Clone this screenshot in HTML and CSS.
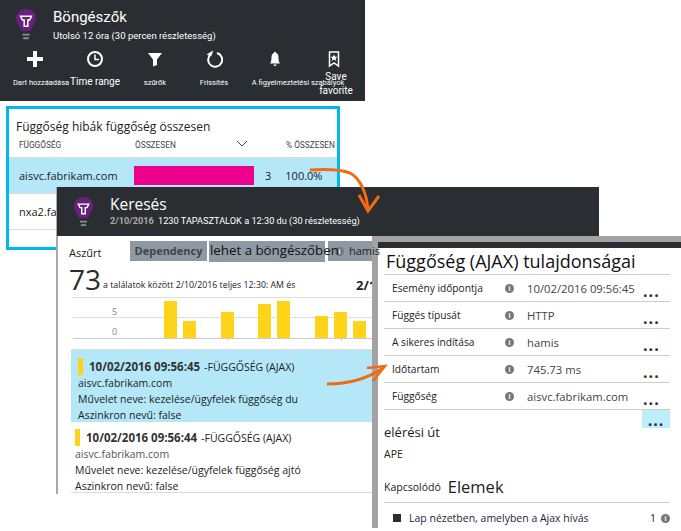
FILE: index.html
```html
<!DOCTYPE html>
<html lang="en">

<head>
  <meta charset="UTF-8" />
  <title>Böngészők</title>
  <link rel="stylesheet" href="styles.css">
</head>

<body>

  <section class="blade-top">
    <div class="head">
      <svg class="bulb" width="22" height="33" viewBox="0 0 24 36">
        <path d="M12 1C5 1 1 6 1 11c0 5 3 7 5 12c.5 1 1 2 2 2h8c1 0 1.500-1 2-2c2-5 5-7 5-12C23 6 19 1 12 1z" fill="#68217a" />
        <path d="M6 9h12l-2 4h-2v7h-4v-7H8z" fill="none" stroke="#fff" stroke-width="1.600" />
        <path d="M8 28h8v2H8zM9 32h6v2H9z" fill="#8a8d90" />
      </svg>
      <div>
        <div class="head-title">Böngészők</div>
        <div class="head-sub">Utolsó 12 óra (30 percen részletesség)</div>
      </div>
    </div>
    <div class="tools">
      <div class="tool t1">
        <svg width="18" height="18" viewBox="0 0 18 18"><path d="M7 1h4v6h6v4h-6v6H7v-6H1V7h6z" fill="#fff" /></svg>
        <span>Dart hozzáadása</span>
      </div>
      <div class="tool t2">
        <svg width="18" height="18" viewBox="0 0 18 18"><circle cx="9" cy="9" r="7" fill="none" stroke="#fff" stroke-width="2" /><path d="M9 4.500V9.500h4" fill="none" stroke="#fff" stroke-width="1.500" /></svg>
        <span class="big">Time range</span>
      </div>
      <div class="tool t3">
        <svg width="18" height="18" viewBox="0 0 18 18"><path d="M2 3h14l-5 6.500V15l-4 1.500v-7z" fill="#fff" /></svg>
        <span>szűrők</span>
      </div>
      <div class="tool t4">
        <svg width="18" height="18" viewBox="0 0 18 18"><path d="M5.500 4.500A7 7 0 1 0 12 3" fill="none" stroke="#fff" stroke-width="2" /><path d="M7 0v6H2z" fill="#fff" transform="rotate(20 6 4)" /></svg>
        <span>Frissítés</span>
      </div>
      <div class="tool t5">
        <svg width="18" height="18" viewBox="0 0 18 18"><path d="M9 2c-.8 0-1.200.5-1.200 1.100C6 3.800 5.500 5.500 5.500 7.500c0 3.500-.8 5-1.500 6h10c-.7-1-1.500-2.500-1.500-6c0-2-.5-3.700-2.300-4.400C10.200 2.500 9.800 2 9 2zM7.500 14.500h3a1.500 1.500 0 0 1-3 0z" fill="#fff" /></svg>
        <span>A figyelmeztetési szabályok</span>
      </div>
      <div class="tool t6">
        <svg width="18" height="18" viewBox="0 0 18 18"><path d="M4.500 2h9v14L9 13l-4.500 3z" fill="none" stroke="#fff" stroke-width="1.500" /><path d="M9 4.500l1.100 2.300h2.400L10.600 8.400l.7 2.500L9 9.500l-2.300 1.400l.7-2.500L5.500 6.800h2.400z" fill="#fff" /></svg>
        <span class="big">Save favorite</span>
      </div>
    </div>
  </section>

  <section class="frame">
    <div class="frame-title">Függőség hibák függőség összesen</div>
    <div class="cols">
      <span class="col-a">FÜGGŐSÉG</span>
      <span class="col-b">ÖSSZESEN</span>
      <svg class="chev" width="12" height="6" viewBox="0 0 12 6"><path d="M1 0l5 5l5-5" fill="none" stroke="#444" /></svg>
      <span class="col-c">% ÖSSZESEN</span>
    </div>
    <div class="dep-row on">
      <span class="dep-name">aisvc.fabrikam.com</span>
      <span class="dep-bar"></span>
      <span class="dep-num">3</span>
      <span>100.0%</span>
    </div>
    <div class="dep-row">
      <span class="dep-name">nxa2.fabrikam.com</span>
    </div>
  </section>

  <section class="blade-search">
    <div class="search-head">
      <svg class="bulb" width="21" height="32" viewBox="0 0 24 36">
        <path d="M12 1C5 1 1 6 1 11c0 5 3 7 5 12c.5 1 1 2 2 2h8c1 0 1.500-1 2-2c2-5 5-7 5-12C23 6 19 1 12 1z" fill="#68217a" />
        <path d="M6 9h12l-2 4h-2v7h-4v-7H8z" fill="none" stroke="#fff" stroke-width="1.600" />
        <path d="M8 28h8v2H8zM9 32h6v2H9z" fill="#8a8d90" />
      </svg>
      <div>
        <div class="search-title">Keresés</div>
        <div class="search-sub"><b>2/10/2016</b> 1230 TAPASZTALOK a 12:30 du (30 részletesség)</div>
      </div>
    </div>
    <div class="filters">
      <span class="filter-label">Aszűrt</span>
      <span class="chip chip-a">Dependency</span>
      <span class="chip chip-c"><i class="info info-dim">i</i><span class="chip-text">hamis</span></span>
      <span class="chip chip-b">lehet a böngészőben</span>
    </div>
    <div class="count-line">
      <span class="count">73</span>
      <span class="count-text">a találatok között 2/10/2016 teljes 12:30: AM és</span>
      <b class="count-end">2/1</b>
    </div>
    <div class="chart">
      <span class="tick tick-5">5</span>
      <span class="tick tick-0">0</span>
      <i class="bar" style="left:91px;height:37px"></i>
      <i class="bar" style="left:110px;height:17px"></i>
      <i class="bar" style="left:148px;height:26px"></i>
      <i class="bar" style="left:185px;height:34px"></i>
      <i class="bar" style="left:204px;height:37px"></i>
      <i class="bar" style="left:242px;height:22px"></i>
      <i class="bar" style="left:261px;height:26px"></i>
      <i class="bar" style="left:280px;height:17px"></i>
      <i class="mark-x mark-x1"></i>
      <i class="mark-x mark-x2"></i>
    </div>
    <div class="result on">
      <div class="result-top"><i class="mark"></i><b>10/02/2016 09:56:45</b> <span>-FÜGGŐSÉG (AJAX)</span></div>
      <div>aisvc.fabrikam.com</div>
      <div>Művelet neve: kezelése/ügyfelek függőség du</div>
      <div>Aszinkron nevű: false</div>
    </div>
    <div class="result">
      <div class="result-top"><i class="mark"></i><b>10/02/2016 09:56:44</b> <span>-FÜGGŐSÉG (AJAX)</span></div>
      <div class="result-host">aisvc.fabrikam.com</div>
      <div>Művelet neve: kezelése/ügyfelek függőség ajtó</div>
      <div>Aszinkron nevű: false</div>
    </div>
  </section>

  <section class="blade-props">
    <div class="props-bar"></div>
    <div class="props-body">
      <h2 class="props-title">Függőség (AJAX) tulajdonságai</h2>
      <div class="prop"><span class="prop-key">Esemény időpontja</span><i class="info">i</i><span class="prop-val">10/02/2016 09:56:45</span><span class="dots">...</span></div>
      <div class="prop"><span class="prop-key">Függés típusát</span><i class="info">i</i><span class="prop-val">HTTP</span><span class="dots">...</span></div>
      <div class="prop"><span class="prop-key">A sikeres indítása</span><i class="info">i</i><span class="prop-val">hamis</span><span class="dots">...</span></div>
      <div class="prop"><span class="prop-key">Időtartam</span><i class="info">i</i><span class="prop-val">745.73 ms</span><span class="dots">...</span></div>
      <div class="prop"><span class="prop-key">Függőség</span><i class="info">i</i><span class="prop-val">aisvc.fabrikam.com</span><span class="dots">...</span></div>
      <div class="path-row">
        <span class="path-label">elérési út</span>
        <span class="dots dots-on">...</span>
      </div>
      <div class="path-val">APE</div>
      <div class="rel-head"><span class="rel-small">Kapcsolódó</span><span class="rel-big">Elemek</span></div>
      <div class="rel-row"><i class="square"></i><span class="rel-text">Lap nézetben, amelyben a Ajax hívás</span><span class="rel-num">1</span><i class="info">i</i></div>
    </div>
  </section>

  <svg class="arrows" width="681" height="531" viewBox="0 0 681 531">
    <path d="M310 170c16-1 30-1 40 3c10 5 17 20 18 38" fill="none" stroke="#f26a12" stroke-width="3" />
    <path d="M359 195l9 16l11-15" fill="none" stroke="#f26a12" stroke-width="3" />
    <path d="M327 384c20 0 40-5 56-16" fill="none" stroke="#f26a12" stroke-width="3" />
    <path d="M367 368l18-2l-12 15" fill="none" stroke="#f26a12" stroke-width="2.500" />
  </svg>

</body>

</html>
```

FILE: styles.css
```css
body {
  margin: 0;
  width: 681px;
  height: 531px;
  position: relative;
  overflow: hidden;
  background: white;
  font-family: "Open Sans", sans-serif;
  color: #222;
}

/* blades sit on a free canvas and overlap */
.blade-top {
  position: absolute;
  left: 0;
  top: 0;
  width: 365px;
  height: 101px;
  background: #2a2e33;
  color: white;
}

.head {
  display: flex;
  gap: 16px;
  padding: 8px 0 0 15px;
}

.head-title {
  font-family: Roboto, sans-serif;
  font-size: 15px;
  line-height: 18px;
}

.head-sub {
  font-family: Roboto, sans-serif;
  font-size: 9.500px;
  margin-top: 4px;
}

.tool {
  position: absolute;
  top: 50px;
  display: flex;
  flex-direction: column;
  align-items: center;
  font-family: Roboto, sans-serif;
  font-size: 7.500px;
  white-space: nowrap;
  width: 60px;
}

.tool span {
  margin-top: 10px;
  line-height: 10px;
}

.tool .big {
  font-size: 10px;
  line-height: 14px;
  margin-top: 7px;
}

.t1 { left: 5px; }
.t2 { left: 65px; }
.t3 { left: 125px; }
.t4 { left: 184px; }
.t5 { left: 245px; }
.t6 { left: 304px; }

.t1 span { margin-left: 12px; }
.t5 span { margin-left: 46px; }

.t6 .big {
  white-space: normal;
  text-align: center;
  width: 40px;
  margin-top: 2px;
  margin-left: 4px;
}

.frame {
  position: absolute;
  left: 6px;
  top: 106px;
  width: 328px;
  height: 138px;
  border: 3px solid #00b7f0;
  background: white;
  font-size: 11px;
}

.frame-title {
  font-size: 12px;
  padding: 10px 0 0 7px;
  line-height: 16px;
}

.cols {
  position: relative;
  height: 22px;
  font-family: Roboto, sans-serif;
  font-size: 8.300px;
  color: #444;
  border-bottom: 1px solid #ddd;
  white-space: nowrap;
}

.cols span,
.chev {
  position: absolute;
  top: 5px;
}

.col-a { left: 10px; }
.col-b { left: 126px; }
.chev { left: 227px; top: 6px; }
.col-c { left: 277px; }

.dep-row {
  display: flex;
  align-items: center;
  height: 35px;
  padding-left: 10px;
  font-size: 11px;
  border-bottom: 1px solid #ddd;
}

.dep-row.on { background: #b4e8f9; }

.dep-name { width: 115px; }

.dep-bar {
  width: 120px;
  height: 19px;
  background: #ec008c;
}

.dep-num { margin: 0 14px 0 11px; }

.blade-search {
  position: absolute;
  left: 56px;
  top: 187px;
  width: 316px;
  height: 307px;
  background: white;
  border-left: 2px solid #aaa;
  box-sizing: border-box;
  font-size: 10.500px;
}

.search-head {
  display: flex;
  gap: 16px;
  width: 542px;
  height: 49px;
  margin-left: -1px;
  padding: 9px 0 0 16px;
  box-sizing: border-box;
  background: #2a2e33;
  color: white;
}

.search-title {
  font-size: 15.500px;
  line-height: 16px;
}

.search-sub {
  font-family: Roboto, sans-serif;
  font-size: 9.200px;
  margin-top: 3px;
  white-space: nowrap;
}

.search-sub b {
  color: #aaa;
  margin-right: 2px;
}

.filters {
  position: relative;
  height: 26px;
}

.filter-label {
  position: absolute;
  left: 11px;
  top: 9px;
  font-size: 11px;
}

.chip {
  position: absolute;
  background: #8e99a5;
  top: 5px;
  height: 20px;
  line-height: 20px;
  white-space: nowrap;
}

.chip-a {
  left: 72px;
  width: 77px;
  text-align: center;
  font-weight: bold;
  font-size: 11px;
  color: #444;
}

.chip-b {
  left: 151px;
  width: 115px;
  height: 21px;
  padding-left: 1px;
  font-size: 13.300px;
  line-height: 18px;
  color: #111;
}

.chip-c {
  left: 270px;
  width: 44px;
  font-size: 11px;
}

.info-dim {
  position: absolute;
  left: 7px;
  top: 6px;
  background: #66707a;
}

/* this label runs on over the next blade */
.chip-text {
  position: absolute;
  left: 21px;
  top: 0;
  z-index: 2;
}

.count-line {
  position: relative;
  height: 36px;
}

.count {
  position: absolute;
  left: 11px;
  top: -2px;
  font-size: 28px;
  line-height: 38px;
  color: #2a2e33;
}

.count-text {
  position: absolute;
  left: 45px;
  top: 17px;
  font-size: 8.800px;
  white-space: nowrap;
}

.count-end {
  position: absolute;
  left: 298px;
  top: 14px;
  font-size: 13px;
}

.chart {
  position: relative;
  height: 40px;
  margin: -1px 0 0 15px;
  border-top: 1px solid #ddd;
  border-bottom: 1px solid #ccc;
  background: linear-gradient(#ddd, #ddd) 0 19px / 100% 1px no-repeat;
}

.tick {
  position: absolute;
  left: 39px;
  font-size: 9px;
  color: #888;
}

.tick-5 { top: 7px; }
.tick-0 { top: 27px; }

.bar {
  position: absolute;
  bottom: 0;
  width: 13px;
  background: #ffd319;
}

.mark-x {
  position: absolute;
  bottom: -3px;
  width: 1px;
  height: 3px;
  background: #ccc;
}

.mark-x1 { left: 154px; }
.mark-x2 { left: 268px; }

.result {
  margin: 10px 0 0 13px;
  padding: 8px 0 0 7px;
  height: 73px;
  box-sizing: border-box;
  font-size: 10.500px;
  line-height: 16px;
  white-space: nowrap;
}

.result.on {
  background: #b4e8f9;
  border-top: 1px solid #ddd;
}

.result + .result {
  margin-top: 0;
  height: 71px;
  padding: 7px 0 0 4px;
  border-bottom: 1px solid #ddd;
}

.result-host { color: #555; }

.result-top {
  display: flex;
  align-items: center;
  gap: 4px;
  height: 17px;
}

.result-top b {
  font-size: 11.500px;
  color: #333;
}

.mark {
  width: 5px;
  height: 17px;
  background: #ffd319;
  margin-right: 2px;
}

.blade-props {
  position: absolute;
  left: 372px;
  top: 236px;
  width: 309px;
  height: 292px;
  background: white;
  border-left: 6px solid #a3a3a3;
  border-top: 6px solid #a3a3a3;
  box-sizing: border-box;
  z-index: 1;
}

.props-bar {
  height: 6px;
  background: #2a2e33;
}

.props-body {
  padding-left: 6px;
  width: 292px;
  box-sizing: border-box;
}

.props-title {
  margin: 0;
  padding-left: 2px;
  font-size: 18px;
  font-weight: normal;
  line-height: 26px;
  white-space: nowrap;
  color: #111;
  border-bottom: 1px solid #ccc;
  height: 26px;
}

.prop {
  display: flex;
  align-items: center;
  height: 26px;
  font-size: 10.200px;
  border-bottom: 1px solid #ccc;
  padding-left: 8px;
}

.prop-key { width: 113px; }

.prop-val {
  width: 103px;
  margin-left: 13px;
  font-size: 11.300px;
  white-space: nowrap;
  color: #444;
}

.info {
  width: 9px;
  height: 9px;
  border-radius: 50%;
  background: #777;
  color: white;
  font: bold 7px/9px "Liberation Sans", sans-serif;
  text-align: center;
  flex: none;
}

.dots {
  font-size: 16px;
  font-weight: bold;
  letter-spacing: 1px;
  line-height: 8px;
  margin: 5px 0 0 13px;
  color: #333;
}

.path-row {
  display: flex;
  justify-content: space-between;
  height: 34px;
}

.path-label {
  font-size: 13px;
  padding-top: 13px;
}

.dots-on {
  width: 28px;
  height: 18px;
  margin: 0;
  background: #bdeefc;
  text-align: center;
  line-height: 20px;
}

.path-val {
  font-size: 10.500px;
  line-height: 14px;
  margin-top: 3px;
}

.rel-head {
  display: flex;
  align-items: center;
  gap: 7px;
  margin-top: 10px;
  height: 31px;
  border-bottom: 1px solid #ccc;
}

.rel-small { font-size: 10.500px; }
.rel-big { font-size: 16.500px; }

.rel-row {
  display: flex;
  align-items: center;
  height: 30px;
  padding-left: 9px;
  font-size: 10.500px;
}

.square {
  width: 8px;
  height: 8px;
  background: #2a2e33;
  margin-right: 8px;
}

.rel-text {
  flex: 1;
  color: #2b1b3d;
}

.rel-num { margin-right: 5px; }

.arrows {
  position: absolute;
  left: 0;
  top: 0;
  z-index: 3;
  pointer-events: none;
}
```
